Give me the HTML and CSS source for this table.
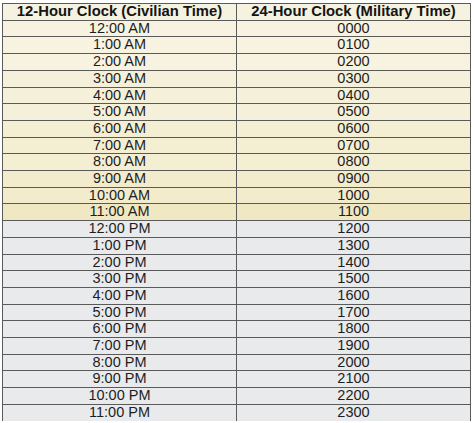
FILE: index.html
```html
<!DOCTYPE html>
<html>
<head>
<meta charset="utf-8">
<link rel="stylesheet" href="styles.css">
</head>
<body>
<table class="clock">
<thead>
<tr class="head"><th>12-Hour Clock (Civilian Time)</th><th>24-Hour Clock (Military Time)</th></tr>
</thead>
<tbody>
<tr class="am a1"><td>12:00 AM</td><td>0000</td></tr>
<tr class="am a1"><td>1:00 AM</td><td>0100</td></tr>
<tr class="am a1"><td>2:00 AM</td><td>0200</td></tr>
<tr class="am a2"><td>3:00 AM</td><td>0300</td></tr>
<tr class="am a2"><td>4:00 AM</td><td>0400</td></tr>
<tr class="am a2"><td>5:00 AM</td><td>0500</td></tr>
<tr class="am a3"><td>6:00 AM</td><td>0600</td></tr>
<tr class="am a3"><td>7:00 AM</td><td>0700</td></tr>
<tr class="am a3"><td>8:00 AM</td><td>0800</td></tr>
<tr class="am a4"><td>9:00 AM</td><td>0900</td></tr>
<tr class="am a4"><td>10:00 AM</td><td>1000</td></tr>
<tr class="am a5"><td>11:00 AM</td><td>1100</td></tr>
<tr class="pm"><td>12:00 PM</td><td>1200</td></tr>
<tr class="pm"><td>1:00 PM</td><td>1300</td></tr>
<tr class="pm"><td>2:00 PM</td><td>1400</td></tr>
<tr class="pm"><td>3:00 PM</td><td>1500</td></tr>
<tr class="pm"><td>4:00 PM</td><td>1600</td></tr>
<tr class="pm"><td>5:00 PM</td><td>1700</td></tr>
<tr class="pm"><td>6:00 PM</td><td>1800</td></tr>
<tr class="pm"><td>7:00 PM</td><td>1900</td></tr>
<tr class="pm"><td>8:00 PM</td><td>2000</td></tr>
<tr class="pm"><td>9:00 PM</td><td>2100</td></tr>
<tr class="pm"><td>10:00 PM</td><td>2200</td></tr>
<tr class="pm last"><td>11:00 PM</td><td>2300</td></tr>
</tbody>
</table>
</body>
</html>
```
FILE: styles.css
```css
html, body {
  margin: 0;
  padding: 0;
  background: #ffffff;
}
body {
  padding: 3px 0 0 2px;
  font-family: "Liberation Sans", Arial, sans-serif;
  color: #1e1e1e;
}
.clock {
  border-collapse: collapse;
  width: 469px;
  table-layout: fixed;
}
.clock th, .clock td {
  border: 1px solid #5a5a5a;
  height: 15.7px;
  padding: 0;
  text-align: center;
  font-size: 14.5px;
  line-height: 15.7px;
  width: 50%;
}
.clock th {
  font-weight: bold;
  font-size: 14.8px;
  color: #141414;
}
.clock .last td {
  border-bottom: none;
}
.clock .head { background: #f6f2e0; }
.clock .a1 { background: #f7f3e0; }
.clock .a2 { background: #f5f0d9; }
.clock .a3 { background: #f4eed3; }
.clock .a4 { background: #f2ebcc; }
.clock .a5 { background: #f0e8c2; }
.clock .pm { background: #e8eaec; }
```
